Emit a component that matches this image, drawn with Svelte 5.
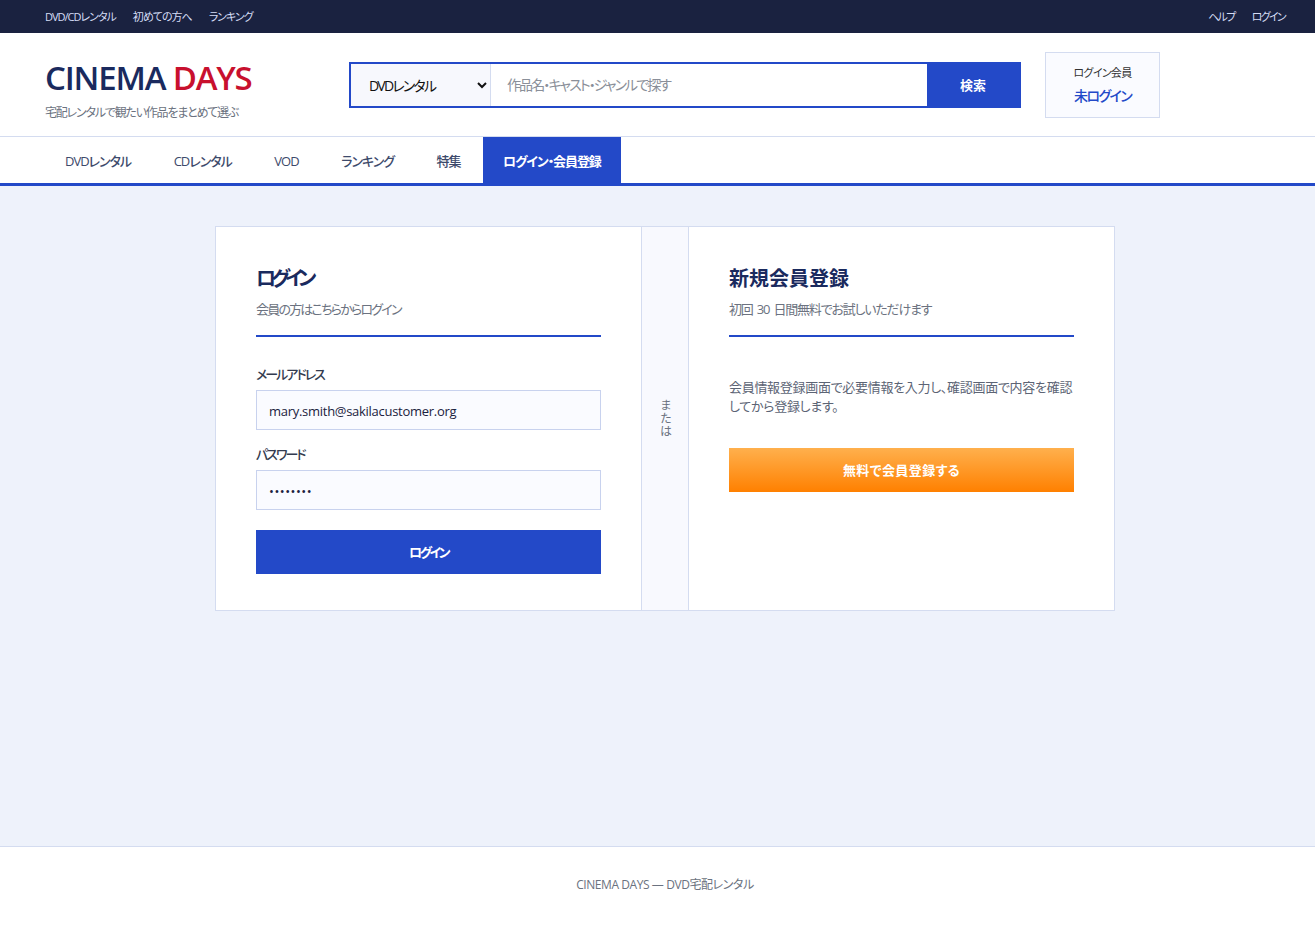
<script>
	const topLeft = ['DVD/CDレンタル', '初めての方へ', 'ランキング'];
	const topRight = ['ヘルプ', 'ログイン'];
	const navItems = ['DVDレンタル', 'CDレンタル', 'VOD', 'ランキング', '特集', 'ログイン・会員登録'];
	const active = 'ログイン・会員登録';

	let email = $state('mary.smith@sakilacustomer.org');
	let password = $state('password');
</script>

<div class="topbar">
	<div class="top-links">
		{#each topLeft as item}
			<a href="#top">{item}</a>
		{/each}
	</div>
	<div class="top-links right">
		{#each topRight as item}
			<a href="#top">{item}</a>
		{/each}
	</div>
</div>

<header class="header">
	<div class="logo">
		<div class="logo-name">CINEMA <span>DAYS</span></div>
		<div class="logo-sub">宅配レンタルで観たい作品をまとめて選ぶ</div>
	</div>
	<form class="search" onsubmit={(e) => e.preventDefault()}>
		<select class="search-cat">
			<option>DVDレンタル</option>
			<option>CDレンタル</option>
		</select>
		<input class="search-input" type="text" placeholder="作品名・キャスト・ジャンルで探す" />
		<button class="search-btn" type="submit">検索</button>
	</form>
	<div class="member">
		<div class="member-label">ログイン会員</div>
		<div class="member-name">未ログイン</div>
	</div>
</header>

<nav class="nav">
	{#each navItems as item}
		<a href="#top" class:active={item === active}>{item}</a>
	{/each}
</nav>

<main class="main">
	<div class="card">
		<section class="pane login">
			<h2>ログイン</h2>
			<p class="lead">会員の方はこちらからログイン</p>
			<form class="form" onsubmit={(e) => e.preventDefault()}>
				<label for="email">メールアドレス</label>
				<input id="email" type="email" bind:value={email} />
				<label for="password">パスワード</label>
				<input id="password" type="password" bind:value={password} />
				<button class="btn btn-blue" type="submit">ログイン</button>
			</form>
		</section>
		<div class="divider"><span>または</span></div>
		<section class="pane">
			<h2>新規会員登録</h2>
			<p class="lead">初回 30 日間無料でお試しいただけます</p>
			<p class="note">会員情報登録画面で必要情報を入力し、確認画面で内容を確認してから登録します。</p>
			<button class="btn btn-orange" type="button">無料で会員登録する</button>
		</section>
	</div>
</main>

<footer class="footer">CINEMA DAYS — DVD宅配レンタル</footer>

<style>
	:global(body) {
		margin: 0;
		background: #eef2fb;
		font-family: 'Open Sans', 'Noto Sans CJK JP', sans-serif;
		font-feature-settings: 'palt';
		color: #1a2240;
	}

	a {
		text-decoration: none;
		color: inherit;
	}

	.topbar {
		height: 33px;
		background: #1a2240;
		display: flex;
		justify-content: space-between;
		align-items: center;
		padding: 0 30px 2px 45px;
		box-sizing: border-box;
		color: #d5ddf5;
		font-size: 11px;
		letter-spacing: -1px;
	}

	.top-links {
		display: flex;
		gap: 17px;
	}

	.top-links.right {
		letter-spacing: -1.7px;
	}

	.header {
		height: 103px;
		background: #fff;
		border-bottom: 1px solid #d4dcf0;
		display: flex;
		align-items: center;
		padding: 0 45px;
	}

	.logo {
		width: 304px;
		flex: none;
		padding-top: 9px;
	}

	.logo-name {
		font-size: 33px;
		font-weight: 600;
		line-height: 40px;
		letter-spacing: -1.2px;
		color: #1a2a5e;
	}

	.logo-name span {
		color: #c8102e;
	}

	.logo-sub {
		margin-top: 6px;
		font-size: 12px;
		line-height: 17px;
		letter-spacing: -1.2px;
		color: #6b7280;
	}

	.search {
		width: 672px;
		height: 46px;
		flex: none;
		display: flex;
		box-sizing: border-box;
		border: 2px solid #2349c8;
		margin-top: 1px;
	}

	.search-cat {
		width: 140px;
		flex: none;
		border: 0;
		border-right: 1px solid #d4dcf0;
		background: #f7f8fd;
		padding: 0 0 0 14px;
		font: inherit;
		font-size: 14px;
		letter-spacing: -1.8px;
		color: #111;
		outline: none;
	}

	.search-input {
		flex: 1;
		min-width: 0;
		border: 0;
		padding: 0 16px 2px;
		font: inherit;
		font-size: 14px;
		letter-spacing: -1.9px;
		outline: none;
	}

	.search-input::placeholder {
		color: #8a8f99;
	}

	.search-btn {
		width: 92px;
		flex: none;
		border: 0;
		padding: 0 0 2px;
		background: #2349c8;
		color: #fff;
		font: inherit;
		font-size: 13px;
		font-weight: 700;
	}

	.member {
		width: 115px;
		height: 66px;
		flex: none;
		box-sizing: border-box;
		margin-left: 24px;
		border: 1px solid #d4dcf0;
		background: #fafbff;
		text-align: center;
		padding-top: 12px;
	}

	.member-label {
		font-size: 11px;
		line-height: 16px;
		letter-spacing: -0.7px;
		color: #333;
	}

	.member-name {
		margin-top: 5px;
		font-size: 14px;
		font-weight: 500;
		line-height: 20px;
		letter-spacing: -1.6px;
		color: #2349c8;
	}

	.nav {
		height: 46px;
		background: #fff;
		border-bottom: 3px solid #2349c8;
		display: flex;
		padding: 0 25px 0 45px;
	}

	.nav a {
		display: flex;
		align-items: center;
		padding: 1px 20px 0;
		margin-right: 2.5px;
		font-size: 13px;
		font-weight: 500;
		line-height: 18px;
		letter-spacing: -1px;
		color: #3d4a6b;
	}

	.nav a.active {
		margin: 0;
		background: #2349c8;
		color: #fff;
		font-weight: 700;
		letter-spacing: -1.1px;
	}

	.main {
		height: 660px;
		box-sizing: border-box;
		padding: 40px 0 0 15px;
	}

	.card {
		width: 900px;
		box-sizing: border-box;
		margin: 0 auto;
		background: #fff;
		border: 1px solid #d4dcf0;
		display: grid;
		grid-template-columns: 1fr 48px 1fr;
	}

	.pane {
		padding: 40px 40px 36px;
	}

	h2 {
		margin: 0;
		font-size: 20px;
		font-weight: 700;
		line-height: 24px;
		color: #1a2a5e;
	}

	.login h2 {
		letter-spacing: -5px;
	}

	.lead {
		margin: 9px 0 0;
		padding-bottom: 17px;
		border-bottom: 2px solid #2349c8;
		font-size: 13px;
		line-height: 18px;
		letter-spacing: -1.2px;
		word-spacing: 2px;
		color: #6b7280;
	}

	.login .lead {
		letter-spacing: -1.8px;
	}

	.form {
		display: flex;
		flex-direction: column;
		margin-top: 27px;
	}

	label {
		font-size: 13px;
		font-weight: 500;
		line-height: 20px;
		letter-spacing: -2px;
		color: #333b4f;
		margin-bottom: 6px;
	}

	input#email,
	input#password {
		height: 40px;
		box-sizing: border-box;
		border: 1px solid #c8d2ee;
		background: #fafbff;
		padding: 1px 12px 0;
		font: inherit;
		font-size: 13px;
		letter-spacing: -0.28px;
		color: #1a2240;
		outline: none;
		margin-bottom: 14px;
	}

	input#password {
		margin-bottom: 20px;
		letter-spacing: 0.5px;
	}

	.btn {
		display: block;
		width: 100%;
		height: 44px;
		border: 0;
		padding: 0 0 2px;
		color: #fff;
		font: inherit;
		font-size: 13px;
		font-weight: 700;
	}

	.btn-blue {
		background: #2349c8;
		letter-spacing: -2.5px;
	}

	.btn-orange {
		background: linear-gradient(#ffb04d, #ff8000);
		margin-top: 31px;
		letter-spacing: 0.4px;
	}

	.divider {
		border-left: 1px solid #d4dcf0;
		border-right: 1px solid #d4dcf0;
		background: #f8f9fe;
		display: flex;
		align-items: center;
		justify-content: center;
	}

	.divider span {
		writing-mode: vertical-rl;
		font-size: 12px;
		letter-spacing: 1px;
		color: #6b7280;
	}

	.note {
		margin: 41px 0 0;
		font-size: 13px;
		line-height: 19px;
		letter-spacing: -0.3px;
		color: #5c6475;
	}

	.btn-orange {
		margin-top: 32px;
	}

	.footer {
		height: 89px;
		box-sizing: border-box;
		background: #fff;
		border-top: 1px solid #d4dcf0;
		padding: 30px 0 0 15px;
		text-align: center;
		font-size: 12px;
		line-height: 16px;
		letter-spacing: -0.43px;
		color: #6b7280;
	}
</style>
